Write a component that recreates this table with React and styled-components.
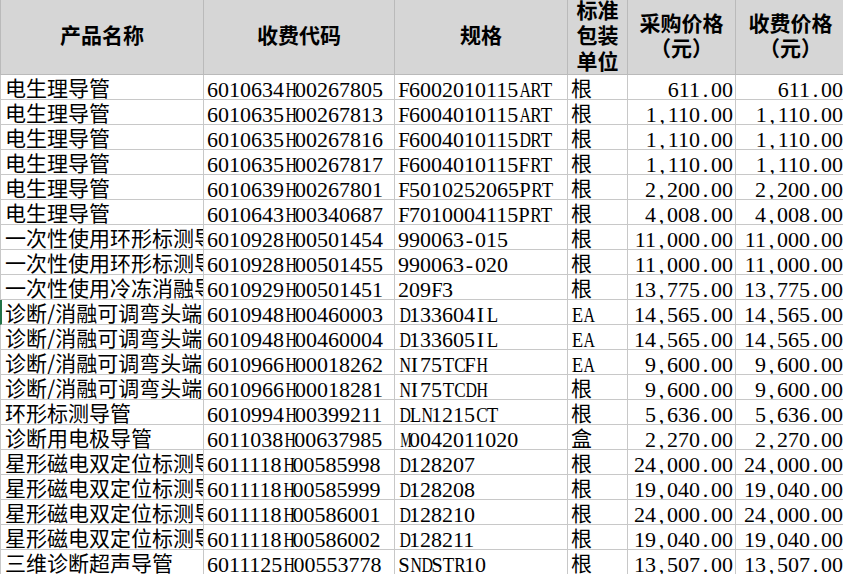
import styled, { createGlobalStyle } from "styled-components";

const GlobalStyle = createGlobalStyle`
  html, body {
    margin: 0;
    padding: 0;
    background: #ffffff;
    overflow: hidden;
  }
`;

const rows = [
  ["电生理导管", "6010634H00267805", "F6002010115ART", "根", "611.00"],
  ["电生理导管", "6010635H00267813", "F6004010115ART", "根", "1,110.00"],
  ["电生理导管", "6010635H00267816", "F6004010115DRT", "根", "1,110.00"],
  ["电生理导管", "6010635H00267817", "F6004010115FRT", "根", "1,110.00"],
  ["电生理导管", "6010639H00267801", "F5010252065PRT", "根", "2,200.00"],
  ["电生理导管", "6010643H00340687", "F7010004115PRT", "根", "4,008.00"],
  ["一次性使用环形标测导管", "6010928H00501454", "990063-015", "根", "11,000.00"],
  ["一次性使用环形标测导管", "6010928H00501455", "990063-020", "根", "11,000.00"],
  ["一次性使用冷冻消融导管", "6010929H00501451", "209F3", "根", "13,775.00"],
  ["诊断/消融可调弯头端导管", "6010948H00460003", "D133604IL", "EA", "14,565.00"],
  ["诊断/消融可调弯头端导管", "6010948H00460004", "D133605IL", "EA", "14,565.00"],
  ["诊断/消融可调弯头端导管", "6010966H00018262", "NI75TCFH", "EA", "9,600.00"],
  ["诊断/消融可调弯头端导管", "6010966H00018281", "NI75TCDH", "根", "9,600.00"],
  ["环形标测导管", "6010994H00399211", "DLN1215CT", "根", "5,636.00"],
  ["诊断用电极导管", "6011038H00637985", "M0042011020", "盒", "2,270.00"],
  ["星形磁电双定位标测导管", "6011118H00585998", "D128207", "根", "24,000.00"],
  ["星形磁电双定位标测导管", "6011118H00585999", "D128208", "根", "19,040.00"],
  ["星形磁电双定位标测导管", "6011118H00586001", "D128210", "根", "24,000.00"],
  ["星形磁电双定位标测导管", "6011118H00586002", "D128211", "根", "19,040.00"],
  ["三维诊断超声导管", "6011125H00553778", "SNDSTR10", "根", "13,507.00"],
];

// the selected row gets Excel's green marker on the left edge
const ACTIVE_ROW = 9;

// Times advance widths (em) for the letters that are wider than a digit
const ADVANCE = {
  A: 0.722, C: 0.667, D: 0.722, E: 0.611, F: 0.556, H: 0.722, L: 0.611,
  M: 0.889, N: 0.722, P: 0.556, R: 0.667, S: 0.556, T: 0.611,
};

const isLatin = (s) => /^[\x00-\x7f]+$/.test(s);

// SimSun-like half-width text: serif digits are already 11px wide at 22px,
// every other character is boxed to that pitch and squeezed if too wide
const Mono = ({ text }) => {
  const parts = [];
  let run = "";
  [...text].forEach((ch, i) => {
    if (/[0-9]/.test(ch)) {
      run += ch;
      return;
    }
    if (run) parts.push(run);
    run = "";
    const adv = ADVANCE[ch] || 0.5;
    parts.push(
      <Glyph key={i} $sx={Math.min(1, 0.52 / adv)}>
        {ch}
      </Glyph>
    );
  });
  if (run) parts.push(run);
  return <>{parts}</>;
};

const PriceHead = ({ label }) => (
  <HeadCell>
    <HeadLine>{label}</HeadLine>
    <HeadLine>
      <Paren>（</Paren>元<Paren $close>）</Paren>
    </HeadLine>
  </HeadCell>
);

export default function App() {
  return (
    <>
      <GlobalStyle />
      <Sheet>
        <HeadCell $first>产品名称</HeadCell>
        <HeadCell>收费代码</HeadCell>
        <HeadCell>规格</HeadCell>
        <HeadCell $tight>标准包装单位</HeadCell>
        <PriceHead label="采购价格" />
        <PriceHead label="收费价格" />

        {rows.map(([name, code, spec, unit, price], i) => (
          <Row key={i}>
            <Cell $first $active={i === ACTIVE_ROW}>
              {name}
            </Cell>
            <Cell $mono>
              <Mono text={code} />
            </Cell>
            <Cell $mono>
              <Mono text={spec} />
            </Cell>
            {isLatin(unit) ? (
              <Cell $mono>
                <Mono text={unit} />
              </Cell>
            ) : (
              <Cell>{unit}</Cell>
            )}
            <Cell $mono $right>
              <Mono text={price} />
            </Cell>
            <Cell $mono $right>
              <Mono text={price} />
            </Cell>
          </Row>
        ))}
      </Sheet>
    </>
  );
}

const Sheet = styled.div`
  display: grid;
  grid-template-columns: 204px 191px 173px 60px 108px 110px;
  grid-auto-rows: 25px;
  grid-template-rows: 75px;
  width: 846px;
  color: #000;
`;

const Row = styled.div`
  display: contents;
`;

const HeadCell = styled.div`
  box-sizing: border-box;
  display: flex;
  flex-direction: column;
  align-items: center;
  justify-content: center;
  text-align: center;
  background: #d6d6d6;
  border-right: 1px solid #bababa;
  border-bottom: 1px solid #bababa;
  border-left: ${(p) => (p.$first ? "1px solid #bababa" : "none")};
  font-family: "Noto Sans CJK SC", sans-serif;
  font-weight: 700;
  font-size: 21px;
  line-height: 25.5px;
  padding: 0 ${(p) => (p.$tight ? "7px" : "4px")} 4px;
  overflow: hidden;
`;

const HeadLine = styled.div`
  white-space: nowrap;
`;

const Paren = styled.span`
  display: inline-block;
  width: 21px;
  text-align: ${(p) => (p.$close ? "left" : "right")};
`;

const Cell = styled.div`
  box-sizing: border-box;
  height: 25px;
  border-right: 1px solid #c8c8c8;
  border-bottom: 1px solid #c8c8c8;
  border-left: ${(p) =>
    p.$first ? (p.$active ? "2px solid #217346" : "1px solid #c8c8c8") : "none"};
  white-space: nowrap;
  overflow: hidden;
  text-align: ${(p) => (p.$right ? "right" : "left")};
  padding: ${(p) =>
    p.$mono
      ? p.$right
        ? "3px 2px 0 0"
        : "3px 0 0 3px"
      : p.$first
      ? `1px 0 0 ${p.$active ? "3px" : "4px"}`
      : "1px 0 0 3px"};
  font-family: ${(p) =>
    p.$mono
      ? `"Liberation Serif", "Times New Roman", serif`
      : `"Noto Sans CJK SC", sans-serif`};
  font-size: ${(p) => (p.$mono ? "22px" : "21px")};
  font-weight: 400;
  line-height: ${(p) => (p.$mono ? "24px" : "23px")};
`;

const Glyph = styled.span`
  display: inline-block;
  width: 11px;
  text-align: center;
  transform: scaleX(${(p) => p.$sx});
`;
